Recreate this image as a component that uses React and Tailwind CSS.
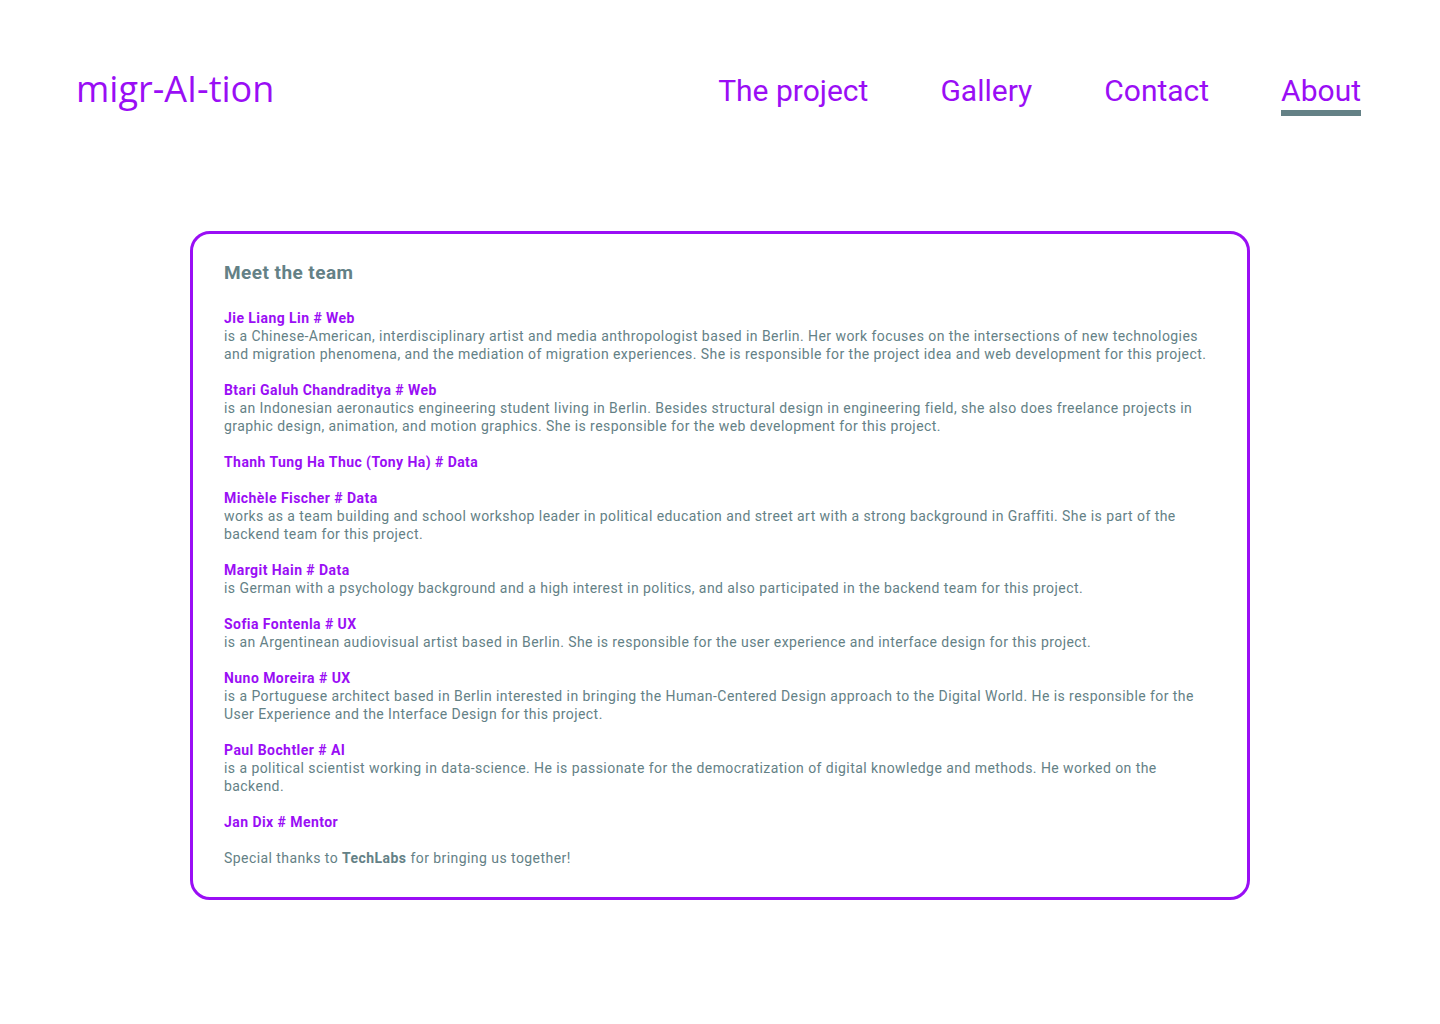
const team = [
  {
    name: "Jie Liang Lin",
    role: "Web",
    bio: "is a Chinese-American, interdisciplinary artist and media anthropologist based in Berlin. Her work focuses on the intersections of new technologies and migration phenomena, and the mediation of migration experiences. She is responsible for the project idea and web development for this project.",
  },
  {
    name: "Btari Galuh Chandraditya",
    role: "Web",
    bio: "is an Indonesian aeronautics engineering student living in Berlin. Besides structural design in engineering field, she also does freelance projects in graphic design, animation, and motion graphics. She is responsible for the web development for this project.",
  },
  { name: "Thanh Tung Ha Thuc (Tony Ha)", role: "Data" },
  {
    name: "Michèle Fischer",
    role: "Data",
    bio: "works as a team building and school workshop leader in political education and street art with a strong background in Graffiti. She is part of the backend team for this project.",
  },
  {
    name: "Margit Hain",
    role: "Data",
    bio: "is German with a psychology background and a high interest in politics, and also participated in the backend team for this project.",
  },
  {
    name: "Sofia Fontenla",
    role: "UX",
    bio: "is an Argentinean audiovisual artist based in Berlin. She is responsible for the user experience and interface design for this project.",
  },
  {
    name: "Nuno Moreira",
    role: "UX",
    bio: "is a Portuguese architect based in Berlin interested in bringing the Human-Centered Design approach to the Digital World. He is responsible for the User Experience and the Interface Design for this project.",
  },
  {
    name: "Paul Bochtler",
    role: "AI",
    bio: "is a political scientist working in data-science. He is passionate for the democratization of digital knowledge and methods. He worked on the backend.",
  },
  { name: "Jan Dix", role: "Mentor" },
];

const navItems = ["The project", "Gallery", "Contact", "About"];

export default function App() {
  return (
    <div className="min-h-[1024px] bg-white font-['Roboto',sans-serif]">
      {/* header */}
      <header className="flex items-start justify-between pl-[76px] pr-[79px] pt-[67px]">
        <a className="font-['Open_Sans',sans-serif] text-[36px] leading-[44px] text-[#9a0ef5]">
          migr-AI-tion
        </a>
        <nav className="flex gap-[72px] pt-[5px]">
          {navItems.map((item) => (
            <a
              key={item}
              className={
                "text-[30px] leading-[38px] text-[#9a0ef5] " +
                (item === "About" ? "border-b-[6px] border-[#648186]" : "")
              }
            >
              {item}
            </a>
          ))}
        </nav>
      </header>

      {/* team card */}
      <main className="flex justify-center pt-[115px]">
        <section className="w-[1060px] rounded-[20px] border-[3px] border-[#9a0ef5] px-[31px] pt-[25px] pb-[30px] text-[14px] leading-[18px] tracking-[0.44px] text-[#648186]">
          <h2 className="mb-[22px] text-[19px] leading-[28px] font-bold">Meet the team</h2>
          <div className="flex flex-col gap-[18px]">
            {team.map((p) => (
              <p key={p.name}>
                <span className="font-bold text-[#9a0ef5]">
                  {p.name} # {p.role}
                </span>
                {p.bio && (
                  <>
                    <br />
                    {p.bio}
                  </>
                )}
              </p>
            ))}
            <p>
              Special thanks to <b>TechLabs</b> for bringing us together!
            </p>
          </div>
        </section>
      </main>
    </div>
  );
}
